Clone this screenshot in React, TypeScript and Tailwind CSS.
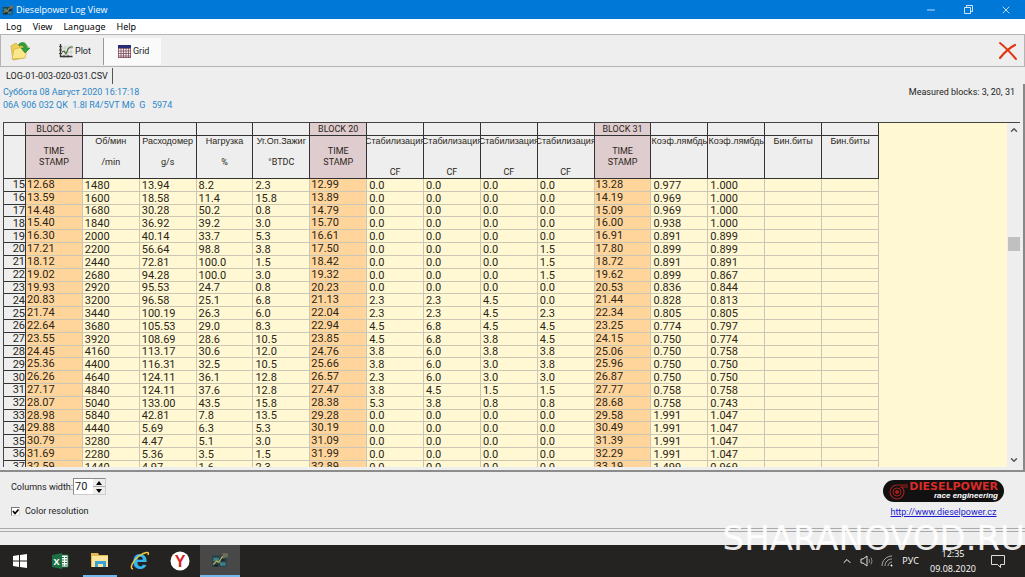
import { ChevronDown, ChevronUp, Minus, X } from "lucide-react";

const TIME = { label: "TIME STAMP", unit: "" };

const columns = [
  { ...TIME, block: "BLOCK 3" },
  { label: "Об/мин", unit: "/min" },
  { label: "Расходомер", unit: "g/s" },
  { label: "Нагрузка", unit: "%" },
  { label: "Уг.Оп.Зажиг", unit: "°BTDC" },
  { ...TIME, block: "BLOCK 20" },
  { label: "Стабилизация", unit: "CF", low: true },
  { label: "Стабилизация", unit: "CF", low: true },
  { label: "Стабилизация", unit: "CF", low: true },
  { label: "Стабилизация", unit: "CF", low: true },
  { ...TIME, block: "BLOCK 31" },
  { label: "Коэф.лямбдь", unit: "" },
  { label: "Коэф.лямбдь", unit: "" },
  { label: "Бин.биты", unit: "" },
  { label: "Бин.биты", unit: "" },
] as { label: string; unit: string; block?: string; low?: boolean }[];

const FIRST_ROW = 15;

const rows = [
  "12.68 1480 13.94 8.2 2.3 12.99 0.0 0.0 0.0 0.0 13.28 0.977 1.000",
  "13.59 1600 18.58 11.4 15.8 13.89 0.0 0.0 0.0 0.0 14.19 0.969 1.000",
  "14.48 1680 30.28 50.2 0.8 14.79 0.0 0.0 0.0 0.0 15.09 0.969 1.000",
  "15.40 1840 36.92 39.2 3.0 15.70 0.0 0.0 0.0 0.0 16.00 0.938 1.000",
  "16.30 2000 40.14 33.7 5.3 16.61 0.0 0.0 0.0 0.0 16.91 0.891 0.899",
  "17.21 2200 56.64 98.8 3.8 17.50 0.0 0.0 0.0 1.5 17.80 0.899 0.899",
  "18.12 2440 72.81 100.0 1.5 18.42 0.0 0.0 0.0 1.5 18.72 0.891 0.891",
  "19.02 2680 94.28 100.0 3.0 19.32 0.0 0.0 0.0 1.5 19.62 0.899 0.867",
  "19.93 2920 95.53 24.7 0.8 20.23 0.0 0.0 0.0 0.0 20.53 0.836 0.844",
  "20.83 3200 96.58 25.1 6.8 21.13 2.3 2.3 4.5 0.0 21.44 0.828 0.813",
  "21.74 3440 100.19 26.3 6.0 22.04 2.3 2.3 4.5 2.3 22.34 0.805 0.805",
  "22.64 3680 105.53 29.0 8.3 22.94 4.5 6.8 4.5 4.5 23.25 0.774 0.797",
  "23.55 3920 108.69 28.6 10.5 23.85 4.5 6.8 3.8 4.5 24.15 0.750 0.774",
  "24.45 4160 113.17 30.6 12.0 24.76 3.8 6.0 3.8 3.8 25.06 0.750 0.758",
  "25.36 4400 116.31 32.5 10.5 25.66 3.8 6.0 3.0 3.8 25.96 0.750 0.750",
  "26.26 4640 124.11 36.1 12.8 26.57 2.3 6.0 3.0 3.0 26.87 0.750 0.750",
  "27.17 4840 124.11 37.6 12.8 27.47 3.8 4.5 1.5 1.5 27.77 0.758 0.758",
  "28.07 5040 133.00 43.5 15.8 28.38 5.3 3.8 0.8 0.8 28.68 0.758 0.743",
  "28.98 5840 42.81 7.8 13.5 29.28 0.0 0.0 0.0 0.0 29.58 1.991 1.047",
  "29.88 4440 5.69 6.3 5.3 30.19 0.0 0.0 0.0 0.0 30.49 1.991 1.047",
  "30.79 3280 4.47 5.1 3.0 31.09 0.0 0.0 0.0 0.0 31.39 1.991 1.047",
  "31.69 2280 5.36 3.5 1.5 31.99 0.0 0.0 0.0 0.0 32.29 1.991 1.047",
  "32.59 1440 4.97 1.6 2.3 32.89 0.0 0.0 0.0 0.0 33.19 1.499 0.969",
].map((line) => line.split(" "));

function AppIcon({ className }: { className: string }) {
  return (
    <svg viewBox="0 0 16 14" className={className}>
      <path d="M1 3h13v10H1z" fill="#263f45" />
      <path d="M2 5h5v3H2zM8 9h5v3H8z" fill="#3f7f86" />
      <path d="M2 11l3-3 2 1 3-5h4" stroke="#b9a85a" strokeWidth="1.2" fill="none" />
      <path d="M10 1h5v4l-2-1-2 2z" fill="#6b6f58" />
      <path d="M3 12h3M9 7h3" stroke="#111" />
    </svg>
  );
}

function TitleBar() {
  return (
    <header className="flex h-[19px] shrink-0 items-center bg-[#0078d7] text-white">
      <AppIcon className="ml-0.5 h-3 w-3" />
      <h1 className="ml-0.5 flex-1 font-['Open_Sans',sans-serif] text-[9px]">Dieselpower Log View</h1>
      <button aria-label="Minimize" className="flex w-9 justify-center">
        <Minus className="h-3 w-3" strokeWidth={1.5} />
      </button>
      <button aria-label="Restore" className="flex w-[38px] justify-center">
        <svg viewBox="0 0 9 9" className="h-[9px] w-[9px]" fill="none" stroke="#fff" strokeWidth=".8">
          <path d="M.5 2.500h6v6h-6zM2.500 2.500v-2h6v6h-2" />
        </svg>
      </button>
      <button aria-label="Close" className="flex w-[38px] justify-center">
        <X className="h-3 w-3" strokeWidth={1.5} />
      </button>
    </header>
  );
}

function MenuBar() {
  return (
    <nav className="flex h-[15px] shrink-0 items-center gap-[11px] bg-white pl-1.5 font-['Noto_Sans',sans-serif] text-[9px] text-black">
      {["Log", "View", "Language", "Help"].map((item) => (
        <button key={item}>{item}</button>
      ))}
    </nav>
  );
}

function ToolBar() {
  return (
    <div className="flex h-[33px] shrink-0 items-center border border-[#b4b4b4] pt-px pr-1.5">
      <button aria-label="Open" className="flex w-[38px] justify-center">
        <svg viewBox="0 0 20 20" className="h-5 w-5">
          <path d="M1 5l5-3 2 2 5-1 1 3v11l-11 2z" fill="#f0cf55" stroke="#caa235" strokeWidth=".7" />
          <path d="M2 18l2-10 14-3-3 12z" fill="#fbe88a" stroke="#d1ae42" strokeWidth=".7" />
          <path d="M9 3c4-3 8-1 8 4h3l-5 5-4-5h3c0-2-2-3-5-2z" fill="#2fa03a" stroke="#187525" strokeWidth=".5" />
        </svg>
      </button>
      <button className="ml-5 flex items-center gap-0.5">
        <svg viewBox="0 0 14 14" className="h-3.5 w-3.5" fill="none">
          <path d="M3 1v10M6 1v10M9 1v10M12 1v10M2 4h12M2 8h12" stroke="#b4bcb4" strokeWidth=".6" />
          <path d="M1.500 0v12.500h12" stroke="#333" strokeWidth="1.300" />
          <path d="M0 2.500h3M0 6h3M0 9.500h3M5 11v2.500M9 11v2.500" stroke="#444" />
          <path d="M3 8l2-1 2 3 2-5 2-2h3" stroke="#4a6b35" strokeWidth="1.200" />
        </svg>
        Plot
      </button>
      <button className="ml-3 flex h-[27px] w-[58px] items-center gap-0.5 border-l border-[#999] bg-[#fafafa] pl-3.5">
        <svg viewBox="0 0 13 13" className="h-[13px] w-[13px]">
          <path d="M0 0h13v13H0z" fill="#faf1f2" />
          <path d="M0 3.500h13M0 6h13M0 8.500h13M0 11h13M3 3v10M5.500 3v10M8 3v10M10.500 3v10M.5 3v10M12.500 3v10M0 12.500h13" stroke="#79495a" strokeWidth=".8" />
          <path d="M0 0h13v3H0z" fill="#242d75" />
        </svg>
        Grid
      </button>
      <button aria-label="Exit" className="ml-auto">
        <svg viewBox="0 0 20 20" className="h-5 w-5" fill="none" stroke="#df3510" strokeLinecap="round">
          <path d="M2 2c5 4 10 9 16 16" strokeWidth="2" />
          <path d="M17 4C11 7 6 12 2 17" strokeWidth="2.200" />
        </svg>
      </button>
    </div>
  );
}

function LogTable() {
  return (
    <table className="h-[351px] w-[875px] shrink-0 table-fixed border-separate border-spacing-0 text-[11px] text-[#2b2618]">
      <colgroup>
        <col className="w-[22px]" />
        {columns.map((_, i) => (
          <col key={i} />
        ))}
      </colgroup>
      <thead className="bg-[#eeeeee] text-center text-[9px]">
        <tr className="h-[13px]">
          <th className="h-[13px] border-r border-b border-[#333] p-0" />
          {columns.map((col, i) => (
            <th
              key={i}
              className={`h-[13px] border-r border-b border-[#333] p-0 leading-3 font-normal ${col.block ? "bg-[#dfcccf]" : ""}`}
            >
              {col.block}
            </th>
          ))}
        </tr>
        <tr className="h-[43px]">
          <th className="h-[43px] border-r border-b border-[#333] p-0" />
          {columns.map((col, i) => (
            <th
              key={i}
              className={`h-[43px] overflow-hidden border-r border-b border-[#333] p-0 font-normal ${
                col.block ? "bg-[#dfcccf] px-2 align-middle leading-[11px]" : "align-top leading-[10px]"
              }`}
            >
              {col.block ? (
                col.label
              ) : (
                <div className="flex flex-col items-center">
                  <span className="font-['Liberation_Sans',sans-serif]">{col.label}</span>
                  <span className={col.low ? "mt-[21px]" : "mt-[11px]"}>{col.unit}</span>
                </div>
              )}
            </th>
          ))}
        </tr>
      </thead>
      <tbody>
        {rows.map((row, r) => (
          <tr key={r}>
            <th className="border-r border-b border-[#333] bg-[#eeeeee] p-0 text-right leading-[11px] font-normal">
              {FIRST_ROW + r}
            </th>
            {columns.map((col, c) => (
              <td
                key={c}
                className={`border-r border-b border-[#cbc7b4] p-0 leading-[11px] ${
                  col.block ? "bg-[#ffd59c] pl-px align-top" : "bg-[#fff8d2] pl-0.5 align-bottom"
                }`}
              >
                {row[c]}
              </td>
            ))}
          </tr>
        ))}
      </tbody>
    </table>
  );
}

function ScrollBar() {
  return (
    <div className="flex w-[13px] shrink-0 flex-col items-center bg-[#eeeeee] text-[#555]">
      <button aria-label="Scroll up" className="flex h-3.5 items-center">
        <ChevronUp className="h-2.5 w-2.5" strokeWidth={3.5} />
      </button>
      <div className="grow-33" />
      <div className="h-3.5 w-3 bg-[#c0c0c0]" />
      <div className="grow-67" />
      <button aria-label="Scroll down" className="flex h-3.5 items-center">
        <ChevronDown className="h-2.5 w-2.5" strokeWidth={3.5} />
      </button>
    </div>
  );
}

function Logo() {
  return (
    <div className="flex h-[22px] w-[121px] items-center rounded-full bg-[#111] pr-1.5 pl-1">
      <svg viewBox="0 0 22 18" className="h-[18px] w-[22px]" fill="none" stroke="#a51e1b">
        <path d="M21 3H10a7 7 0 1 0 7 7c0-3-2-5-4-5h8" strokeWidth="1.200" />
        <circle cx="10" cy="10" r="4" />
        <circle cx="10" cy="10" r="1.500" fill="#a51e1b" />
      </svg>
      <div className="flex flex-1 flex-col items-end">
        <span className="font-['DejaVu_Sans',sans-serif] text-[11px] leading-[10px] font-bold text-[#d92c27]">DIESELPOWER</span>
        <span className="font-['Liberation_Sans',sans-serif] text-[8px] leading-[8px] font-bold text-white italic">race engineering</span>
      </div>
    </div>
  );
}

function Options() {
  return (
    <section className="flex h-[59px] shrink-0 justify-between border-t-2 border-b border-t-[#8c8c8c] border-b-[#aaa] pr-[21px] pl-[11px]">
      <div className="flex flex-col">
        <div className="mt-1.5 flex h-[17px] items-center">
          <label htmlFor="columns-width">Columns width:</label>
          <div className="flex h-[17px] w-[33px] border border-[#8a8a8a] border-r-[#ccc] border-b-[#ccc] bg-white">
            <input id="columns-width" type="text" defaultValue="70" className="w-[19px] pl-px text-[11px] outline-none" />
            <div className="flex flex-1 flex-col bg-[#eeeeee]">
              <button aria-label="Increase" className="flex flex-1 items-center justify-center border-b border-[#aaa]">
                <svg viewBox="0 0 6 4" className="h-1 w-1.5"><path d="M0 4l3-4 3 4z" /></svg>
              </button>
              <button aria-label="Decrease" className="flex flex-1 items-center justify-center">
                <svg viewBox="0 0 6 4" className="h-1 w-1.5"><path d="M0 0l3 4 3-4z" /></svg>
              </button>
            </div>
          </div>
        </div>
        <label className="mt-2.5 flex items-center gap-[5px]">
          <span className="grid h-[9px] w-[9px]">
            <input
              type="checkbox"
              defaultChecked
              className="peer col-start-1 row-start-1 h-[9px] w-[9px] appearance-none border border-[#777] border-r-[#ddd] border-b-[#ddd] bg-white"
            />
            <svg viewBox="0 0 9 9" className="pointer-events-none invisible col-start-1 row-start-1 peer-checked:visible" fill="none">
              <path d="M2 4l2 2.500 3.500-4" stroke="#000" strokeWidth="1.700" />
            </svg>
          </span>
          Color resolution
        </label>
      </div>
      <div className="flex flex-col items-center pt-2">
        <Logo />
        <a href="http://www.dieselpower.cz" className="mt-1 leading-3 text-[#1a1ad0] underline">
          http://www.dieselpower.cz
        </a>
      </div>
    </section>
  );
}

function TaskBar() {
  return (
    <footer className="flex h-8 shrink-0 items-stretch bg-[#252321] font-['Open_Sans',sans-serif] text-white">
      <button aria-label="Start" className="flex w-10 items-center justify-center">
        <svg viewBox="0 0 14 14" className="h-3.5 w-3.5" fill="#fff">
          <path d="M0 2l6-1v5.500H0zM7 1l7-1v6.500H7zM0 7.500h6V13l-6-1zM7 7.500h7V14l-7-1z" />
        </svg>
      </button>
      <button aria-label="Excel" className="flex w-10 items-center justify-center">
        <svg viewBox="0 0 18 16" className="h-4 w-[18px]">
          <path d="M9 2h8v12H9z" fill="#fff" stroke="#1d7044" />
          <path d="M11 4.500h2M14 4.500h2M11 7h2M14 7h2M11 9.500h2M14 9.500h2M11 12h2M14 12h2" stroke="#1d7044" />
          <path d="M1 2l10-2v16L1 14z" fill="#1d7044" />
          <text x="2.500" y="11.500" fontSize="9" fontWeight="bold" fill="#fff">X</text>
        </svg>
      </button>
      <button aria-label="Explorer" className="flex w-10 items-center justify-center">
        <span className="flex h-full w-[34px] items-center justify-center border-b-2 border-[#76b9ed]">
          <svg viewBox="0 0 18 16" className="h-4 w-[18px]">
            <path d="M0 1h7l1 2h9v12H0z" fill="#e3b955" />
            <path d="M1 4h16v11H1z" fill="#fbe49b" />
            <path d="M4 15V9h11v6h-3v-3H7v3z" fill="#3ba2d8" />
          </svg>
        </span>
      </button>
      <button aria-label="Internet Explorer" className="flex w-10 items-center justify-center">
        <svg viewBox="0 0 20 20" className="h-5 w-5">
          <text x="2.500" y="17.500" fontSize="27" fontWeight="bold" fontFamily="Liberation Sans" fill="#35b6ee">e</text>
          <path d="M3 18C-1 18 3 9 9 5s11-5 9-1" fill="none" stroke="#f4ca3e" strokeWidth="1.500" />
        </svg>
      </button>
      <button aria-label="Yandex" className="flex w-10 items-center justify-center">
        <svg viewBox="0 0 20 20" className="h-5 w-5">
          <circle cx="10" cy="10" r="9.500" fill="#fff" />
          <text x="10" y="16" textAnchor="middle" fontSize="16" fontWeight="bold" fontFamily="Liberation Sans" fill="#d62222">Y</text>
        </svg>
      </button>
      <button aria-label="Dieselpower Log View" className="flex w-10 items-center justify-center border-b-2 border-[#76b9ed] bg-[#484848]">
        <AppIcon className="h-4 w-[18px]" />
      </button>
      <div className="ml-auto flex items-center">
        <button aria-label="Show hidden icons">
          <ChevronUp className="h-3 w-3" strokeWidth={2} />
        </button>
        <svg viewBox="0 0 14 14" className="ml-[7px] h-3.5 w-3.5" fill="none" stroke="#ddd">
          <path d="M1 5h2l4-3v10L3 9H1z" />
          <path d="M9 5q1 2 0 4M11 3.500q2 3.500 0 7" stroke="#888" />
        </svg>
        <svg viewBox="0 0 14 14" className="ml-1.5 h-3.5 w-3.5" fill="none" stroke="#aaa">
          <path d="M2 12C2 6 7 2 12 2M5 12c0-4 3-7 7-7M8 12c0-2 2-4 4-4" />
          <path d="M11 12l1-1" stroke="#fff" strokeWidth="2" />
        </svg>
        <span className="ml-2 text-[9px]">РУС</span>
        <div className="ml-2.5 w-12 text-center text-[9px] leading-[15px]">
          <div>12:35</div>
          <div>09.08.2020</div>
        </div>
        <button aria-label="Notifications" className="mr-5 ml-3.5">
          <svg viewBox="0 0 14 14" className="h-3.5 w-3.5" fill="none" stroke="#ddd">
            <path d="M.5 1.500h13v9h-4v3l-3-3h-6z" />
          </svg>
        </button>
      </div>
    </footer>
  );
}

export default function App() {
  return (
    <div className="relative flex h-screen flex-col overflow-hidden bg-[#eeeeee] font-['Roboto',sans-serif] text-[9px] leading-3 text-[#222]">
      <TitleBar />
      <MenuBar />
      <ToolBar />
      <div className="flex h-[17px] shrink-0 items-end">
        <button className="h-4 border-r border-[#555] pr-1 pl-1.5">LOG-01-003-020-031.CSV</button>
      </div>
      <main className="flex min-h-0 flex-1 flex-col border-r-2 border-[#888] pb-[3px] pl-[3px]">
        <div className="flex h-[38px] shrink-0 justify-between pt-0.5 pr-2">
          <div className="leading-[13px] whitespace-pre text-[#2c86c8]">
            <p>Суббота 08 Август 2020 16:17:18</p>
            <p>06A 906 032 QK  1.8l R4/5VT M6  G   5974</p>
          </div>
          <p className="leading-[13px]">Measured blocks: 3, 20, 31</p>
        </div>
        <div className="mr-[3px] flex min-h-0 flex-1 overflow-hidden border-t border-l border-[#444] bg-[#fff8d2]">
          <div className="flex min-w-0 flex-1 items-start overflow-hidden">
            <LogTable />
          </div>
          <ScrollBar />
        </div>
      </main>
      <Options />
      <div className="mt-0.5 h-3.5 shrink-0 border-t border-[#aaa]" />
      <TaskBar />
      <div className="pointer-events-none absolute right-0 bottom-5 font-['DejaVu_Sans',sans-serif] text-[34px] leading-[38px] whitespace-nowrap text-white/90">
        SHARANOVOD.RU
      </div>
    </div>
  );
}
